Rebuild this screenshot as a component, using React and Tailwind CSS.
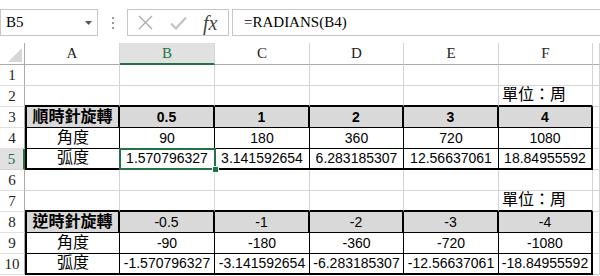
import React from "react";

const COLS = ["A", "B", "C", "D", "E", "F", ""];

const ROWS = [
  [],
  ["", "", "", "", "", "單位：周"],
  ["順時針旋轉", "0.5", "1", "2", "3", "4"],
  ["角度", "90", "180", "360", "720", "1080"],
  ["弧度", "1.570796327", "3.141592654", "6.283185307", "12.56637061", "18.84955592"],
  [],
  ["", "", "", "", "", "單位：周"],
  ["逆時針旋轉", "-0.5", "-1", "-2", "-3", "-4"],
  ["角度", "-90", "-180", "-360", "-720", "-1080"],
  ["弧度", "-1.570796327", "-3.141592654", "-6.283185307", "-12.56637061", "-18.84955592"],
];

const cellFont = { fontFamily: '"Liberation Sans", "Noto Sans CJK TC", sans-serif' };

const FormulaBar = () => (
  <div className="flex flex-row items-start h-[43px] pt-[9px] bg-white">
    {/* name box */}
    <div className="relative flex items-center w-[98px] h-[27px] border border-[#c6c6c6] pl-[5px]">
      <span className="text-[15px] text-black" style={{ fontFamily: '"Liberation Serif", serif' }}>
        B5
      </span>
      <svg className="absolute right-[5px] top-[11px]" width="7" height="4" viewBox="0 0 7 4">
        <polygon points="0,0 7,0 3.5,4" fill="#555" />
      </svg>
    </div>
    {/* dots */}
    <div className="flex flex-col gap-[3px] ml-[14px] mt-[8px]">
      <span className="w-[2px] h-[2px] bg-[#9a9a9a]" />
      <span className="w-[2px] h-[2px] bg-[#9a9a9a]" />
      <span className="w-[2px] h-[2px] bg-[#9a9a9a]" />
    </div>
    {/* fx box */}
    <div className="flex flex-row items-center w-[102px] h-[27px] ml-[13px] border border-[#c6c6c6]">
      <svg className="ml-[10px]" width="15" height="15" viewBox="0 0 15 15">
        <path d="M1 1 L14 14 M14 1 L1 14" stroke="#ababab" strokeWidth="1.3" fill="none" />
      </svg>
      <svg className="ml-[17px]" width="17" height="14" viewBox="0 0 17 14">
        <path d="M1 7.5 L6 12.5 L16 1.5" stroke="#c2c2c2" strokeWidth="2.2" fill="none" />
      </svg>
      <span
        className="ml-[16px] text-[20px] italic text-[#444] leading-none"
        style={{ fontFamily: '"Liberation Serif", serif' }}
      >
        fx
      </span>
    </div>
    {/* formula input */}
    <div className="flex items-center flex-1 h-[27px] ml-[3px] pl-[11px] border-y border-l border-[#c6c6c6]">
      <span className="text-[15px] text-black" style={{ fontFamily: '"Liberation Serif", serif' }}>
        =RADIANS(B4)
      </span>
    </div>
  </div>
);

const cellBorder = (r, c) => {
  const head = r === 3 || r === 8;
  const mid = r === 4 || r === 9;
  const bot = r === 5 || r === 10;
  if (c <= 5 && (head || mid || bot)) {
    let cls = "";
    if (head || c === 5) cls += " border-r-2 border-r-black";
    else cls += " border-r border-r-black";
    if (bot) cls += " border-b-2 border-b-black";
    else cls += " border-b border-b-black";
    if (c === 0) cls += " border-l-2 border-l-black";
    if (head) cls += " bg-[#d9d9d9]";
    return cls;
  }
  if (c <= 5 && (r === 2 || r === 7)) {
    return " border-r border-r-[#d4d4d4] border-b-2 border-b-black";
  }
  return " border-r border-r-[#d4d4d4] border-b border-b-[#d4d4d4]";
};

const Sheet = () => (
  <div className="relative">
    <div className="grid grid-cols-[25px_95px_95px_95px_94px_95px_94px_1fr] grid-rows-[22px_repeat(10,21px)]">
      {/* corner */}
      <div className="relative border-r border-r-[#ababab] border-b border-b-[#ababab] bg-white">
        <svg className="absolute left-0 top-0" width="25" height="22" viewBox="0 0 25 22">
          <polygon points="22,5 22,19 8,19" fill="#d6d6d6" />
        </svg>
      </div>
      {COLS.map((col, i) =>
        col === "B" ? (
          <div
            key={i}
            className="flex items-center justify-center bg-[#e1e1e1] border-r border-r-[#d4d4d4] border-b-2 border-b-[#217346] text-[15px] text-[#217346]"
            style={{ fontFamily: '"Liberation Serif", serif' }}
          >
            {col}
          </div>
        ) : (
          <div
            key={i}
            className="flex items-center justify-center bg-white border-r border-r-[#d4d4d4] border-b border-b-[#ababab] text-[15px] text-[#222]"
            style={{ fontFamily: '"Liberation Serif", serif' }}
          >
            {col}
          </div>
        )
      )}

      {ROWS.map((row, ri) => {
        const r = ri + 1;
        return (
          <React.Fragment key={r}>
            {r === 5 ? (
              <div
                className="flex items-center justify-center bg-[#e1e1e1] border-r-2 border-r-[#217346] border-b border-b-[#d4d4d4] text-[15px] text-[#217346]"
                style={{ fontFamily: '"Liberation Serif", serif' }}
              >
                {r}
              </div>
            ) : (
              <div
                className="flex items-center justify-center bg-white border-r border-r-[#ababab] border-b border-b-[#e1e1e1] text-[15px] text-[#222]"
                style={{ fontFamily: '"Liberation Serif", serif' }}
              >
                {r}
              </div>
            )}
            {COLS.map((_, c) => {
              const v = row[c] || "";
              const isUnit = v === "單位：周";
              const bold = (r === 3 && c <= 5) || (r === 8 && c === 0);
              return (
                <div
                  key={c}
                  className={
                    "flex items-end pb-[1px] overflow-hidden whitespace-nowrap text-black leading-[18px]" +
                    (isUnit ? " justify-start pl-[3px] text-[15px]" : " justify-center") +
                    (/^[-0-9.]+$/.test(v) ? " text-[14px]" : " text-[16px]") +
                    (bold ? " font-bold" : "") +
                    cellBorder(r, c)
                  }
                  style={cellFont}
                >
                  {v}
                </div>
              );
            })}
          </React.Fragment>
        );
      })}
    </div>

    {/* active cell B5 */}
    <div className="absolute left-[119px] top-[105px] w-[97px] h-[22px] border-2 border-[#217346]" />
    <div className="absolute left-[212px] top-[123px] w-[7px] h-[7px] bg-[#217346] border border-white" />
  </div>
);

export default function App() {
  return (
    <div className="w-[600px] h-[276px] overflow-hidden bg-white">
      <FormulaBar />
      <Sheet />
    </div>
  );
}
